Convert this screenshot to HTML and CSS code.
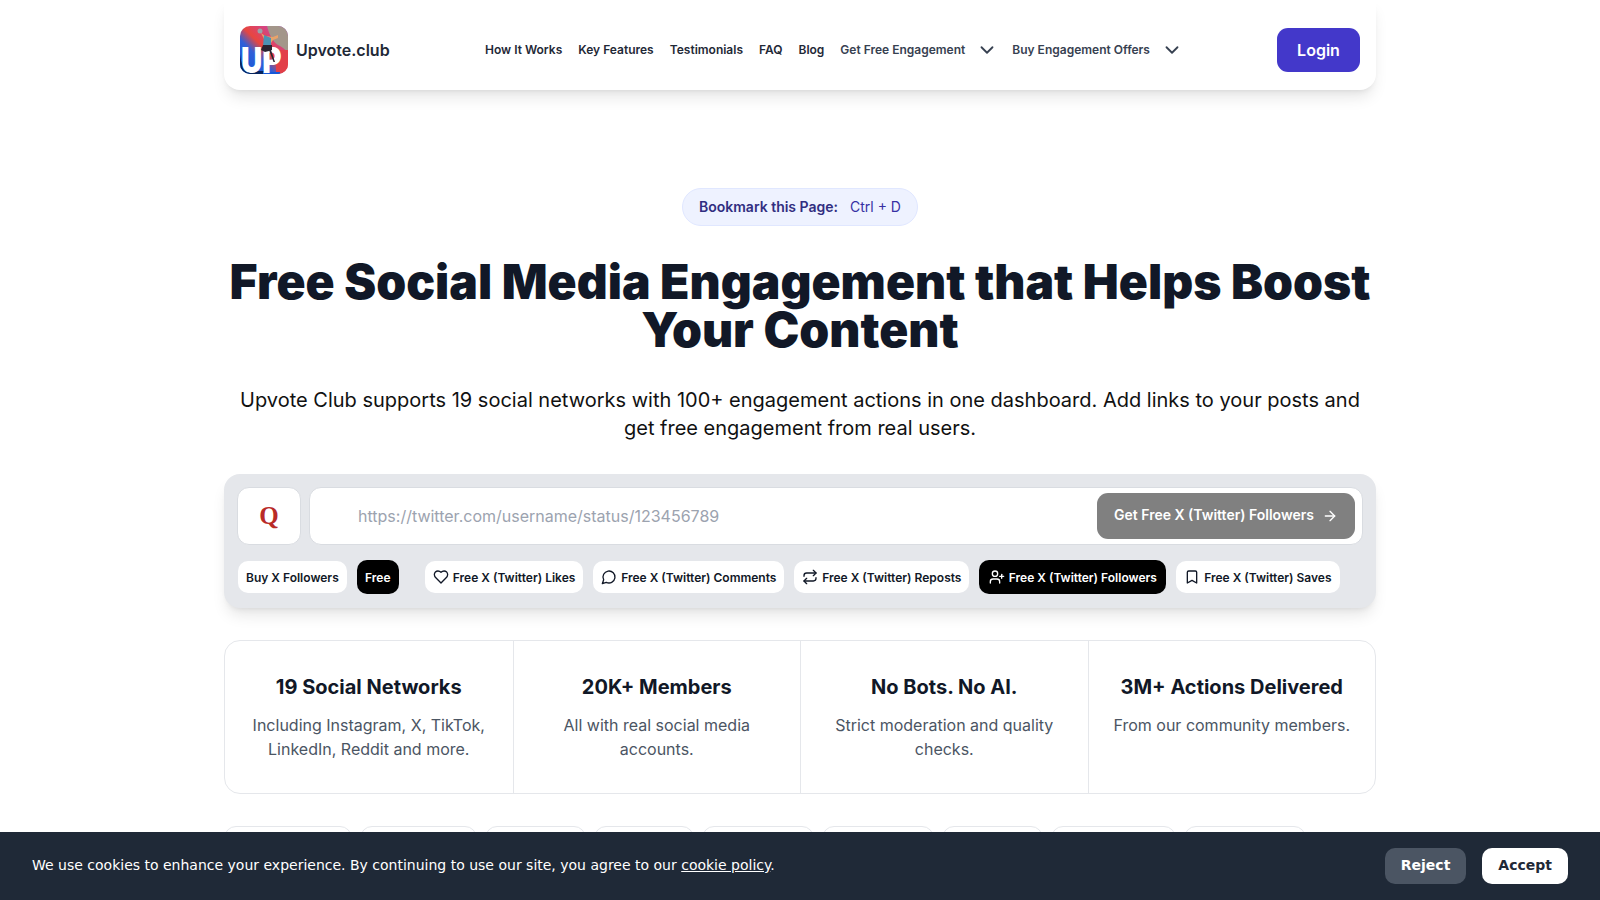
FILE: index.html
```html
<!DOCTYPE html>
<html lang="en">
<head>
<meta charset="utf-8">
<title>Upvote.club</title>
<link rel="stylesheet" href="styles.css">
</head>
<body>
<div class="page">
  <header class="navbar">
    <a class="brand">
      <span class="logo">
        <svg class="logo-art" viewBox="0 0 48 48" width="48" height="48">
          <defs>
            <linearGradient id="lg" x1="0" y1="1" x2="1" y2="0">
              <stop offset="0" stop-color="#0b57d8"/>
              <stop offset=".36" stop-color="#2f5fd8"/>
              <stop offset=".52" stop-color="#e8463f"/>
              <stop offset=".78" stop-color="#d2448c"/>
              <stop offset="1" stop-color="#8a3fd0"/>
            </linearGradient>
            <clipPath id="lc"><rect width="48" height="48" rx="10"/></clipPath>
          </defs>
          <g clip-path="url(#lc)">
            <rect width="48" height="48" fill="url(#lg)"/>
            <path d="M27 0H48V27C45 23 42 21 38 19C33 16 29 8 27 0Z" fill="#a3968a"/>
            <path d="M36 24H48V48H36Z" fill="#e23f48"/>
            <path d="M0 28V48H25V45H10C4 45 1 38 0 28Z" fill="#06245e"/>
            <path d="M23 46H40V48H23Z" fill="#1558d8"/>
          </g>
        </svg>
        <span class="logo-up">UP</span>
        <svg class="logo-art logo-figure" viewBox="0 0 48 48" width="48" height="48">
          <circle cx="20" cy="5" r="2.5" fill="#9aa3a8"/>
          <path d="M21 7L25 10L33 11L38 9L38 12L33 14L31 17L25 15Z" fill="#e9a36a"/>
          <path d="M24 9L31 12L31 20L23 20Z" fill="#4c93b4"/>
          <path d="M23 19L32 19L32 24L29 25L25 26L21 24Z" fill="#2a2430"/>
          <path d="M29 24L31 24L35 36L33.5 36Z" fill="#2a2430"/>
        </svg>
      </span>
      <span class="brand-name">Upvote.club</span>
    </a>
    <nav class="links">
      <a>How It Works</a>
      <a>Key Features</a>
      <a>Testimonials</a>
      <a>FAQ</a>
      <a>Blog</a>
      <a class="drop">Get Free Engagement
        <svg class="chev" viewBox="0 0 24 24"><path d="m6 9 6 6 6-6"/></svg></a>
      <a class="drop">Buy Engagement Offers
        <svg class="chev" viewBox="0 0 24 24"><path d="m6 9 6 6 6-6"/></svg></a>
    </nav>
    <a class="login">Login</a>
  </header>

  <main class="hero">
    <div class="badge"><b>Bookmark this Page:</b><span>Ctrl + D</span></div>
    <h1>Free Social Media Engagement that Helps Boost Your Content</h1>
    <p class="sub">Upvote Club supports 19 social networks with 100+ engagement actions in one dashboard. Add links to your posts and get free engagement from real users.</p>

    <section class="panel">
      <div class="panel-top">
        <div class="netbox">Q</div>
        <div class="field">
          <span class="placeholder">https://twitter.com/username/status/123456789</span>
          <a class="go">Get Free X (Twitter) Followers
            <svg class="ico go-ico" viewBox="0 0 24 24"><path d="M5 12h14"/><path d="m12 5 7 7-7 7"/></svg></a>
        </div>
      </div>
      <div class="chips">
        <a class="chip">Buy X Followers</a>
        <a class="chip on free">Free</a>
        <a class="chip sep"><svg class="ico" viewBox="0 0 24 24"><path d="M19 14c1.49-1.46 3-3.21 3-5.5A5.5 5.5 0 0 0 16.5 3c-1.76 0-3 .5-4.5 2-1.5-1.5-2.74-2-4.5-2A5.5 5.5 0 0 0 2 8.5c0 2.3 1.5 4.05 3 5.5l7 7Z"/></svg>Free X (Twitter) Likes</a>
        <a class="chip"><svg class="ico" viewBox="0 0 24 24"><path d="M7.9 20A9 9 0 1 0 4 16.1L2 22Z"/></svg>Free X (Twitter) Comments</a>
        <a class="chip"><svg class="ico" viewBox="0 0 24 24"><path d="m17 2 4 4-4 4"/><path d="M3 11v-1a4 4 0 0 1 4-4h14"/><path d="m7 22-4-4 4-4"/><path d="M21 13v1a4 4 0 0 1-4 4H3"/></svg>Free X (Twitter) Reposts</a>
        <a class="chip on"><svg class="ico" viewBox="0 0 24 24"><path d="M16 21v-2a4 4 0 0 0-4-4H6a4 4 0 0 0-4 4v2"/><circle cx="9" cy="7" r="4"/><path d="M19 8v6"/><path d="M22 11h-6"/></svg>Free X (Twitter) Followers</a>
        <a class="chip"><svg class="ico" viewBox="0 0 24 24"><path d="m19 21-7-4-7 4V5a2 2 0 0 1 2-2h10a2 2 0 0 1 2 2v16z"/></svg>Free X (Twitter) Saves</a>
      </div>
    </section>

    <section class="stats">
      <div class="stat"><h3>19 Social Networks</h3><p>Including Instagram, X, TikTok, LinkedIn, Reddit and more.</p></div>
      <div class="stat"><h3>20K+ Members</h3><p>All with real social media accounts.</p></div>
      <div class="stat"><h3>No Bots. No AI.</h3><p>Strict moderation and quality checks.</p></div>
      <div class="stat"><h3>3M+ Actions Delivered</h3><p>From our community members.</p></div>
    </section>

    <div class="nets">
      <a class="net n1">Instagram</a>
      <a class="net n2">Twitter</a>
      <a class="net n3">TikTok</a>
      <a class="net n4">Reddit</a>
      <a class="net n5">LinkedIn</a>
      <a class="net n6">YouTube</a>
      <a class="net n7">Quora</a>
      <a class="net n8">Facebook</a>
      <a class="net n9">Telegram</a>
    </div>
  </main>
</div>

<aside class="cookie">
  <p>We use cookies to enhance your experience. By continuing to use our site, you agree to our <a>cookie policy</a>.</p>
  <div class="cookie-btns">
    <button class="reject">Reject</button>
    <button class="accept">Accept</button>
  </div>
</aside>
</body>
</html>
```
FILE: styles.css
```css
* { box-sizing: border-box; }
html, body { margin: 0; height: 900px; overflow: hidden; background: #fff; }
body { font-family: Inter, "Liberation Sans", sans-serif; color: #111827; }
.page { width: 1152px; margin: 0 auto; }

.navbar {
  height: 90px; display: flex; align-items: center;
  padding: 10px 16px 0; background: #fff; border-radius: 0 0 16px 16px;
  box-shadow: 0 10px 15px -3px rgba(0,0,0,.1), 0 4px 6px -4px rgba(0,0,0,.1);
}
.brand { display: flex; align-items: center; gap: 8px; width: 245px; flex: none; }
.logo { display: block; flex: none; position: relative; width: 48px; height: 48px; }
.logo-art { display: block; }
.logo-figure { position: absolute; left: 0; top: 0; }
.logo-up {
  position: absolute; left: 1px; top: 21px; width: 50px; transform: scaleX(.84); transform-origin: 0 0;
  font-size: 35px; line-height: 26px; font-weight: 900; color: #fff; white-space: nowrap;
}
.brand-name { font-size: 16px; font-weight: 600; color: #1f2937; }
.links { display: flex; align-items: center; gap: 16px; flex: 1; margin-top: -2px; font-size: 12px; font-weight: 600; color: #1f2937; }
.drop { display: flex; align-items: center; gap: 11px; color: #374151; }
.drop + .drop { margin-left: -2px; }
.chev { width: 22px; height: 22px; margin-top: 2px; fill: none; stroke: #374151; stroke-width: 2; stroke-linecap: round; stroke-linejoin: round; }
.login {
  width: 83px; height: 44px; display: flex; align-items: center; justify-content: center;
  background: #4338ca; color: #fff; font-size: 16px; font-weight: 600; border-radius: 11px;
}

.hero { display: flex; flex-direction: column; align-items: center; padding-top: 98px; }
.badge {
  height: 38px; width: 236px; display: flex; align-items: center; justify-content: center; gap: 12px; padding-bottom: 2px;
  background: #eef2ff; border: 1px solid #e0e7ff; border-radius: 19px; font-size: 14px; color: #3730a3;
}
.badge b { font-weight: 600; color: #312e81; }
h1 { margin: 32px 0 0; width: 100%; font-size: 48px; line-height: 48px; font-weight: 900; text-align: center; color: #111827; }
.sub { margin: 32px 0 0; width: 100%; font-size: 20px; line-height: 28px; text-align: center; color: #111; }

.panel {
  margin-top: 32px; width: 100%; height: 134px; padding: 13px; background: #e5e7eb;
  border-radius: 16px; box-shadow: 0 10px 15px -3px rgba(0,0,0,.1), 0 4px 6px -4px rgba(0,0,0,.1);
}
.panel-top { display: flex; gap: 8px; height: 58px; }
.netbox {
  width: 64px; flex: none; display: flex; align-items: center; justify-content: center;
  background: #fff; border: 1px solid #d9dce1; border-radius: 12px; font: 700 25px "Liberation Serif", serif; color: #b92b27;
}
.field {
  flex: 1; display: flex; align-items: center; justify-content: space-between;
  background: #fff; border: 1px solid #d9dce1; border-radius: 12px; padding: 0 7px 0 48px;
}
.placeholder { font-size: 16px; color: #9ca3af; }
.go {
  width: 258px; height: 46px; display: flex; align-items: center; justify-content: center; gap: 8px;
  padding-bottom: 3px; background: #808080; color: #fff; font-size: 14px; font-weight: 600; border-radius: 11px;
}
.go-ico { margin-top: 3px; }
.ico { width: 16px; height: 16px; flex: none; fill: none; stroke: currentColor; stroke-width: 2; stroke-linecap: round; stroke-linejoin: round; }
.chips { display: flex; align-items: center; gap: 9.8px; margin: 15px 0 0 1px; height: 34px; }
.chip {
  height: 32px; display: flex; align-items: center; gap: 4px; padding: 0 8px;
  background: #fff; border-radius: 10px; font-size: 12px; font-weight: 600; color: #111827; white-space: nowrap;
}
.chip.on { background: #000; color: #fff; height: 34px; padding: 0 9.5px; }
.chip.free { padding: 0 8.5px; }
.chip.sep { margin-left: 16px; }

.stats {
  margin-top: 32px; width: 100%; height: 154px; display: grid; grid-template-columns: repeat(4, 1fr);
  border: 1px solid #e5e7eb; border-radius: 16px;
}
.stat { padding: 32px 24px 0; text-align: center; border-left: 1px solid #e5e7eb; }
.stat:first-child { border-left: 0; }
.stat h3 { margin: 0; font-size: 20px; line-height: 28px; font-weight: 700; color: #111827; }
.stat p { margin: 12px 0 0; font-size: 16px; line-height: 24px; color: #4b5563; }

.nets { margin-top: 32px; width: 100%; display: flex; gap: 8px; }
.net { height: 40px; display: flex; align-items: center; justify-content: center; border: 1px solid #e5e7eb; border-radius: 12px; font-size: 14px; }
.n1 { width: 128px; } .n2 { width: 117px; } .n3 { width: 101px; } .n4 { width: 100px; } .n5 { width: 112px; }
.n6 { width: 112px; } .n7 { width: 101px; } .n8 { width: 125px; } .n9 { width: 122px; }

.cookie {
  position: fixed; left: 0; right: 0; bottom: 0; height: 68px; padding: 0 32px;
  display: flex; align-items: center; justify-content: space-between;
  background: #1f2937; color: #fff; font-family: "DejaVu Sans", sans-serif; font-size: 14px;
}
.cookie p { margin: 0 0 2px; }
.cookie a { text-decoration: underline; }
.cookie-btns { display: flex; gap: 16px; }
.cookie button {
  height: 36px; padding: 0 16px 2px; border: 0; border-radius: 10px; font: 700 14px "DejaVu Sans", sans-serif;
}
.reject { background: #4b5563; color: #fff; }
.accept { background: #fff; color: #1f2937; }
```
